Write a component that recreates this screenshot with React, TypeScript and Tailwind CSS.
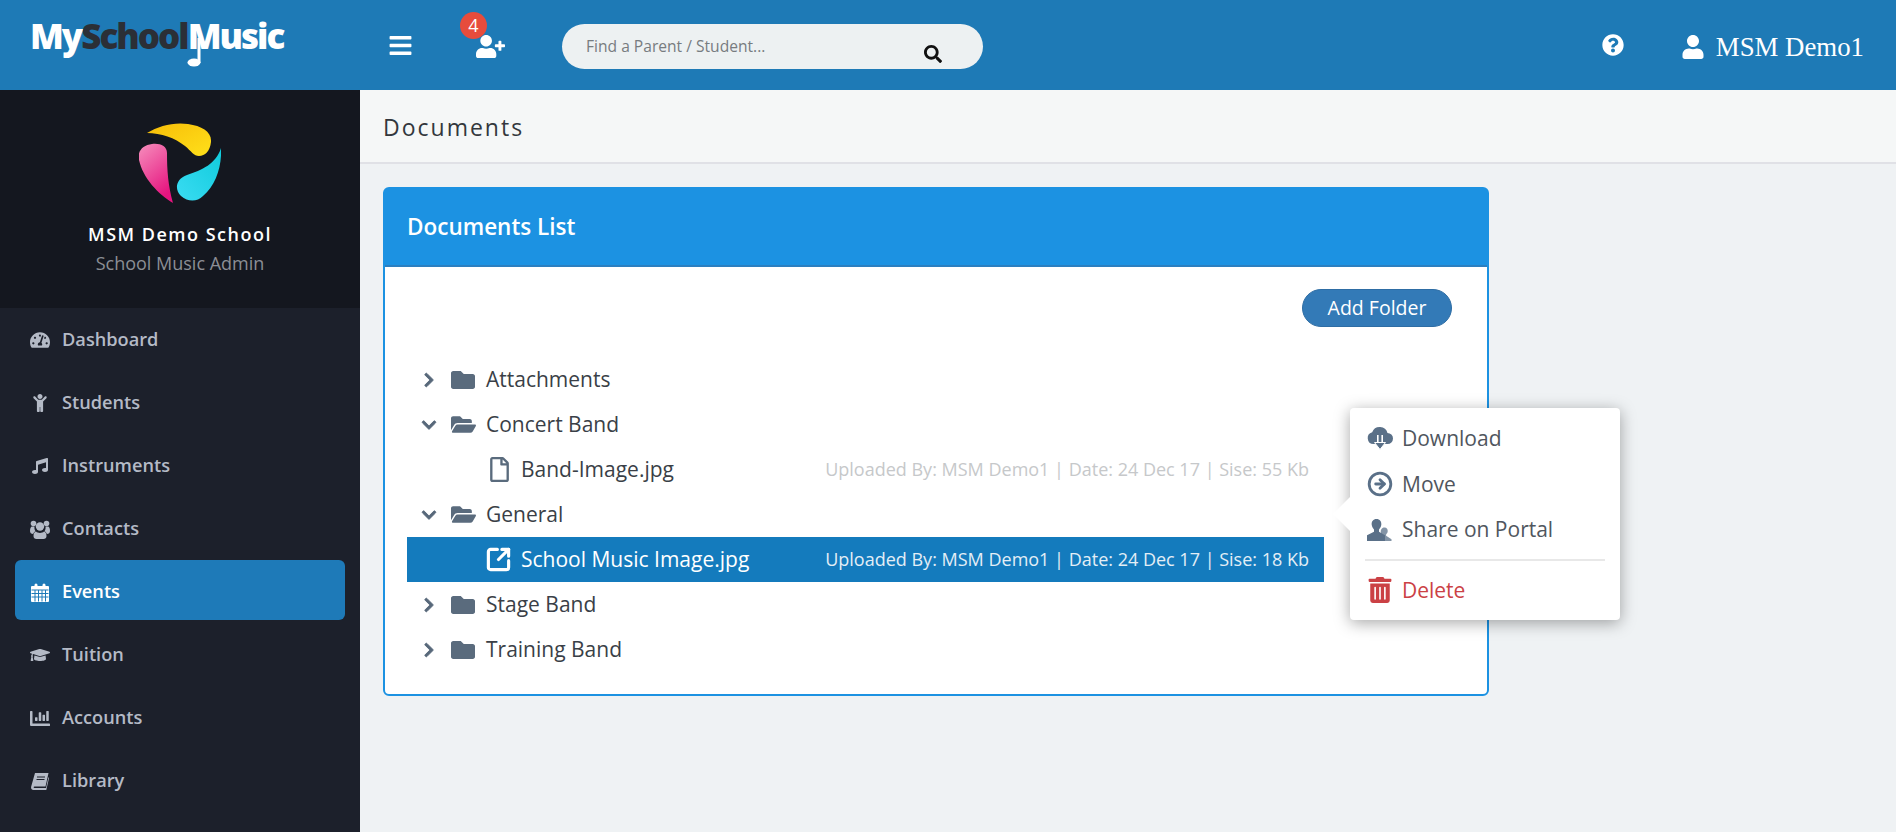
import React from "react";
import {
  FaBars,
  FaChartBar,
  FaChevronDown,
  FaChevronRight,
  FaChild,
  FaFolder,
  FaFolderOpen,
  FaGraduationCap,
  FaMusic,
  FaQuestionCircle,
  FaRegFile,
  FaSearch,
  FaTachometerAlt,
  FaTrashAlt,
  FaUser,
  FaUserPlus,
} from "react-icons/fa";
import { CircleArrowRight, SquareArrowOutUpRight } from "lucide-react";

const CalendarIcon = () => (
  <svg width="18" height="19" viewBox="0 0 18 19" fill="currentColor">
    <path d="M1 3h2.5v-1a1.5 1.5 0 0 1 3 0v1h5v-1a1.5 1.5 0 0 1 3 0v1H17a1 1 0 0 1 1 1v14a1 1 0 0 1-1 1H1a1 1 0 0 1-1-1V4a1 1 0 0 1 1-1z" />
    <path
      stroke="#1e7ab8"
      strokeWidth="1"
      d="M0.5 7h17M0.5 10.5h17M0.5 14h17M4 7v11.5M7.5 7v11.5M11 7v11.5M14.500 7v11.5"
    />
  </svg>
);

const BookIcon = () => (
  <svg width="18" height="17" viewBox="0 0 18 17" fill="currentColor">
    <path d="M4 0h13.500l-3 13.500H3.500c-1 0-1.300 1.500 0 1.500h11.500l2.500-11 .5 1-2.700 12H2.500C.5 17-.300 15.500.2 13.500z" />
    <path stroke="#1c202b" strokeWidth="1" d="M6 4h8M5.500 6.500h8" />
  </svg>
);

// fa4 "users": big middle person with a smaller one either side
const ContactsIcon = () => (
  <svg width="20" height="19" viewBox="0 0 20 19" fill="currentColor">
    <circle cx="3.500" cy="3.500" r="2.800" />
    <circle cx="16.500" cy="3.500" r="2.800" />
    <path d="M0 11c0-3 1-4.500 2-4.500h2.500c-.3 2 .2 3.500 1 4.700-1.300.6-2 1.600-2.300 2.800C1.300 14 0 13 0 11zM20 11c0-3-1-4.500-2-4.500h-2.500c.3 2-.2 3.500-1 4.700 1.300.6 2 1.600 2.300 2.800 1.900 0 3.200-1 3.200-3z" />
    <circle cx="10" cy="6.500" r="4.200" />
    <path d="M6 11.500c1 1 2.400 1.400 4 1.400s3-.4 4-1.400c1.500.2 2.500 2 2.500 4.500 0 2-1.200 3-3 3h-7c-1.800 0-3-1-3-3 0-2.500 1-4.300 2.500-4.500z" />
  </svg>
);

const CloudDownloadIcon = () => (
  <svg width="26" height="25" viewBox="0 0 26 25" fill="currentColor">
    <path d="M6.500 18a6 6 0 0 1-1.300-11.800A8 8 0 0 1 20.500 7a5.500 5.500 0 0 1 0 11z" />
    <path stroke="white" strokeWidth="6" fill="none" d="M13 9v10" />
    <path stroke="currentColor" strokeWidth="2.800" fill="none" d="M13 8v13" />
    <path d="M7.500 16.500h11L13 23.500z" stroke="white" strokeWidth="1" />
  </svg>
);

const ShareIcon = () => (
  <svg width="25" height="22" viewBox="0 0 25 22" fill="currentColor">
    <path d="M17.500 8.500c2.300 0 3.500 2 3.200 4-.2 1.300-.9 2.300-1.600 2.900v1.400l5.400 3.500v1.700H16v-3l-2.800-2.300c1-.6 1-2 .6-3.700-.3-2.400 1.400-4.500 3.700-4.500z" opacity=".75" />
    <path d="M9.500 0c3.300 0 5.200 2.700 4.800 5.800-.3 2-1.300 3.700-2.300 4.700v2.200l6 3.600V22H0v-5.700l7-3.600v-2.200C6 9.500 5 7.800 4.700 5.800 4.300 2.700 6.200 0 9.500 0z" />
  </svg>
);

const SchoolLogo = () => (
  <svg width="82" height="84" viewBox="0 0 82 84">
    <defs>
      <linearGradient id="logo-yellow" x1="0" y1="0" x2="1" y2="1">
        <stop offset="0" stopColor="#f7bd08" />
        <stop offset="1" stopColor="#ffe01a" />
      </linearGradient>
      <linearGradient id="logo-pink" x1="0" y1="0" x2="0.500" y2="1">
        <stop offset="0" stopColor="#f68fbd" />
        <stop offset="1" stopColor="#e6147f" />
      </linearGradient>
      <linearGradient id="logo-cyan" x1="1" y1="0" x2="0" y2="1">
        <stop offset="0" stopColor="#10cbdc" />
        <stop offset="1" stopColor="#3adcf2" />
      </linearGradient>
    </defs>
    <path
      fill="url(#logo-yellow)"
      d="M8 10C20 3 34-1 49 1c14 2 24 8 23 18-1 9-6 14-12 14-5 0-8-5-14-10C36 15 22 10 8 10z"
    />
    <path
      fill="url(#logo-pink)"
      d="M13 21c8-1 15 2 15 9 0 17 1 32 6 50C19 71 4 55 0 37c-2-9 4-15 13-16z"
    />
    <path
      fill="url(#logo-cyan)"
      d="M82 25c1 18-5 37-18 48-6 6-15 6-22 0-7-7-5-17 6-21 15-5 29-11 34-27z"
    />
  </svg>
);

const navItems = [
  { label: "Dashboard", icon: <FaTachometerAlt size={20} /> },
  { label: "Students", icon: <FaChild size={18} /> },
  { label: "Instruments", icon: <FaMusic size={16} /> },
  { label: "Contacts", icon: <ContactsIcon /> },
  { label: "Events", icon: <CalendarIcon />, active: true },
  { label: "Tuition", icon: <FaGraduationCap size={24} /> },
  { label: "Accounts", icon: <FaChartBar size={21} /> },
  { label: "Library", icon: <BookIcon /> },
];

function Sidebar() {
  return (
    <aside className="w-[360px] shrink-0 bg-[#1c202b]">
      <div className="flex h-[218px] flex-col items-center bg-[#14171f] pt-[33px]">
        <SchoolLogo />
        <div className="mt-[15px] text-[18px] leading-[24px] font-semibold tracking-[1.500px] text-white">
          MSM Demo School
        </div>
        <div className="mt-[5px] text-[18px] leading-[24px] text-[#8b8e95]">School Music Admin</div>
      </div>
      <nav className="flex flex-col gap-[3px]">
        {navItems.map((item) => (
          <div
            key={item.label}
            className={`mx-[15px] flex h-[60px] items-center rounded-[6px] px-[15px] pt-[4px] text-[18.200px] font-semibold ${
              item.active ? "bg-[#1e7ab8] text-white" : "text-[#b4bac6]"
            }`}
          >
            <span className="flex w-[20px] justify-center">{item.icon}</span>
            <span className="ml-[12px]">{item.label}</span>
          </div>
        ))}
      </nav>
    </aside>
  );
}

function TopBar() {
  return (
    <header className="flex h-[90px] shrink-0 items-center bg-[#1e7ab6] text-white">
      <div className="relative w-[360px] shrink-0 self-start pt-[13px] pl-[30px]">
        <div className="text-[35px] leading-[46px] font-extrabold tracking-[-2px]">
          My<span className="text-[#2b2f36]">School</span>Music
        </div>
        <svg className="absolute top-[38px] left-[187px]" width="18" height="29" viewBox="0 0 18 29" fill="white">
          <ellipse cx="7" cy="24.500" rx="6.500" ry="4" />
          <rect x="10.500" y="0" width="3" height="25" />
        </svg>
      </div>
      <FaBars size={25} className="ml-[28px]" />
      <div className="relative mt-[3px] ml-[63px]">
        <FaUserPlus size={29} />
        <span className="absolute -top-[20px] -left-[16px] flex h-[27px] w-[27px] items-center justify-center rounded-full bg-[#e74c3c] text-[18px]">
          4
        </span>
      </div>
      <div className="mt-[2px] ml-[57px] flex h-[45px] w-[421px] items-center rounded-full bg-[#edf1f2] pr-[41px] pl-[24px]">
        <span className="mt-[1px] text-[15.600px] text-[#777c80]">Find a Parent / Student...</span>
        <FaSearch size={18} className="mt-[16px] ml-auto text-[#111]" />
      </div>
      <FaQuestionCircle size={22} className="mr-[57px] ml-auto" />
      <FaUser size={24} className="mt-[3px] mr-[11px]" />
      <span className="mt-[4px] mr-[32px] font-['Liberation_Serif',serif] text-[26.800px]">MSM Demo1</span>
    </header>
  );
}

function FolderRow({ name, open }: { name: string; open?: boolean }) {
  return (
    <div className="flex h-[45px] items-center text-[#3a3f47]">
      <span className="flex w-[44px] justify-center text-[#57687a]">
        {open ? (
          <FaChevronDown size={16} stroke="currentColor" strokeWidth={30} />
        ) : (
          <FaChevronRight size={16} stroke="currentColor" strokeWidth={30} />
        )}
      </span>
      <span className="w-[35px] text-[#5a6b7d]">{open ? <FaFolderOpen size={25} /> : <FaFolder size={24} />}</span>
      <span>{name}</span>
    </div>
  );
}

function FileRow({ name, meta, active }: { name: string; meta: string; active?: boolean }) {
  return (
    <div className={`flex h-[45px] items-center pr-[15px] pl-[82px] ${active ? "bg-[#147bbd] text-white" : "text-[#3a3f47]"}`}>
      <span className="w-[32px]">
        {active ? (
          <SquareArrowOutUpRight size={27} strokeWidth={2.800} className="-ml-[4px]" />
        ) : (
          <FaRegFile size={25} className="-ml-[2px] text-[#5a6b7d]" />
        )}
      </span>
      <span>{name}</span>
      <span className={`ml-auto text-[18px] ${active ? "text-[#e3eef6]" : "text-[#c6c8ca]"}`}>{meta}</span>
    </div>
  );
}

function ContextMenu() {
  return (
    <div className="absolute top-[219px] left-[965px] h-[212px] w-[270px] rounded-[4px] bg-white text-[21px] text-[#50565e] shadow-[0_3px_16px_rgba(0,0,0,0.35)]">
      <div className="absolute top-[94px] -left-[12px] h-[24px] w-[24px] rotate-45 bg-white" />
      <div className="relative pt-[8px]">
        <div className="flex h-[45.500px] items-center pl-[17px]">
          <span className="w-[35px] text-[#5a7088]">
            <CloudDownloadIcon />
          </span>
          Download
        </div>
        <div className="flex h-[45.500px] items-center pl-[17px]">
          <span className="w-[35px] text-[#5a7088]">
            <CircleArrowRight size={26} strokeWidth={2.600} />
          </span>
          Move
        </div>
        <div className="flex h-[45.500px] items-center pl-[17px]">
          <span className="w-[35px] text-[#5a7088]">
            <ShareIcon />
          </span>
          Share on Portal
        </div>
        <div className="mx-[15px] mt-[6px] border-t-2 border-[#e8e8e8]" />
        <div className="mt-[7px] flex h-[45.500px] items-center pl-[17px] text-[#cb4145]">
          <span className="w-[35px]">
            <FaTrashAlt size={26} />
          </span>
          Delete
        </div>
      </div>
    </div>
  );
}

export default function App() {
  return (
    <div className="flex h-screen flex-col overflow-hidden bg-[#eff2f4] font-['Open_Sans',sans-serif]">
      <TopBar />
      <div className="flex flex-1">
        <Sidebar />
        <main className="flex-1">
          <div className="flex h-[74px] items-center border-b-2 border-[#e0e1e6] bg-[#f5f7f7] pt-[2px] pl-[23px] text-[23px] tracking-[2px] text-[#33373d]">
            Documents
          </div>
          <div className="relative mt-[23px] ml-[23px] h-[509px] w-[1106px] rounded-[6px] border-2 border-[#1c92e2] bg-white">
            <div className="flex h-[78px] items-center border-b-2 border-[#2b7fc0] bg-[#1c92e2] pl-[22px] text-[22.500px] font-semibold text-white">
              Documents List
            </div>
            <div className="flex justify-end pt-[22px] pr-[35px]">
              <button className="h-[38px] w-[150px] rounded-full border border-[#2e6da4] bg-[#337ab7] text-[19.500px] text-white">
                Add Folder
              </button>
            </div>
            <div className="mt-[30px] ml-[22px] w-[917px] text-[21px]">
              <FolderRow name="Attachments" />
              <FolderRow name="Concert Band" open />
              <FileRow name="Band-Image.jpg" meta="Uploaded By: MSM Demo1 | Date: 24 Dec 17 | Sise: 55 Kb" />
              <FolderRow name="General" open />
              <FileRow name="School Music Image.jpg" meta="Uploaded By: MSM Demo1 | Date: 24 Dec 17 | Sise: 18 Kb" active />
              <FolderRow name="Stage Band" />
              <FolderRow name="Training Band" />
            </div>
            <ContextMenu />
          </div>
        </main>
      </div>
    </div>
  );
}
